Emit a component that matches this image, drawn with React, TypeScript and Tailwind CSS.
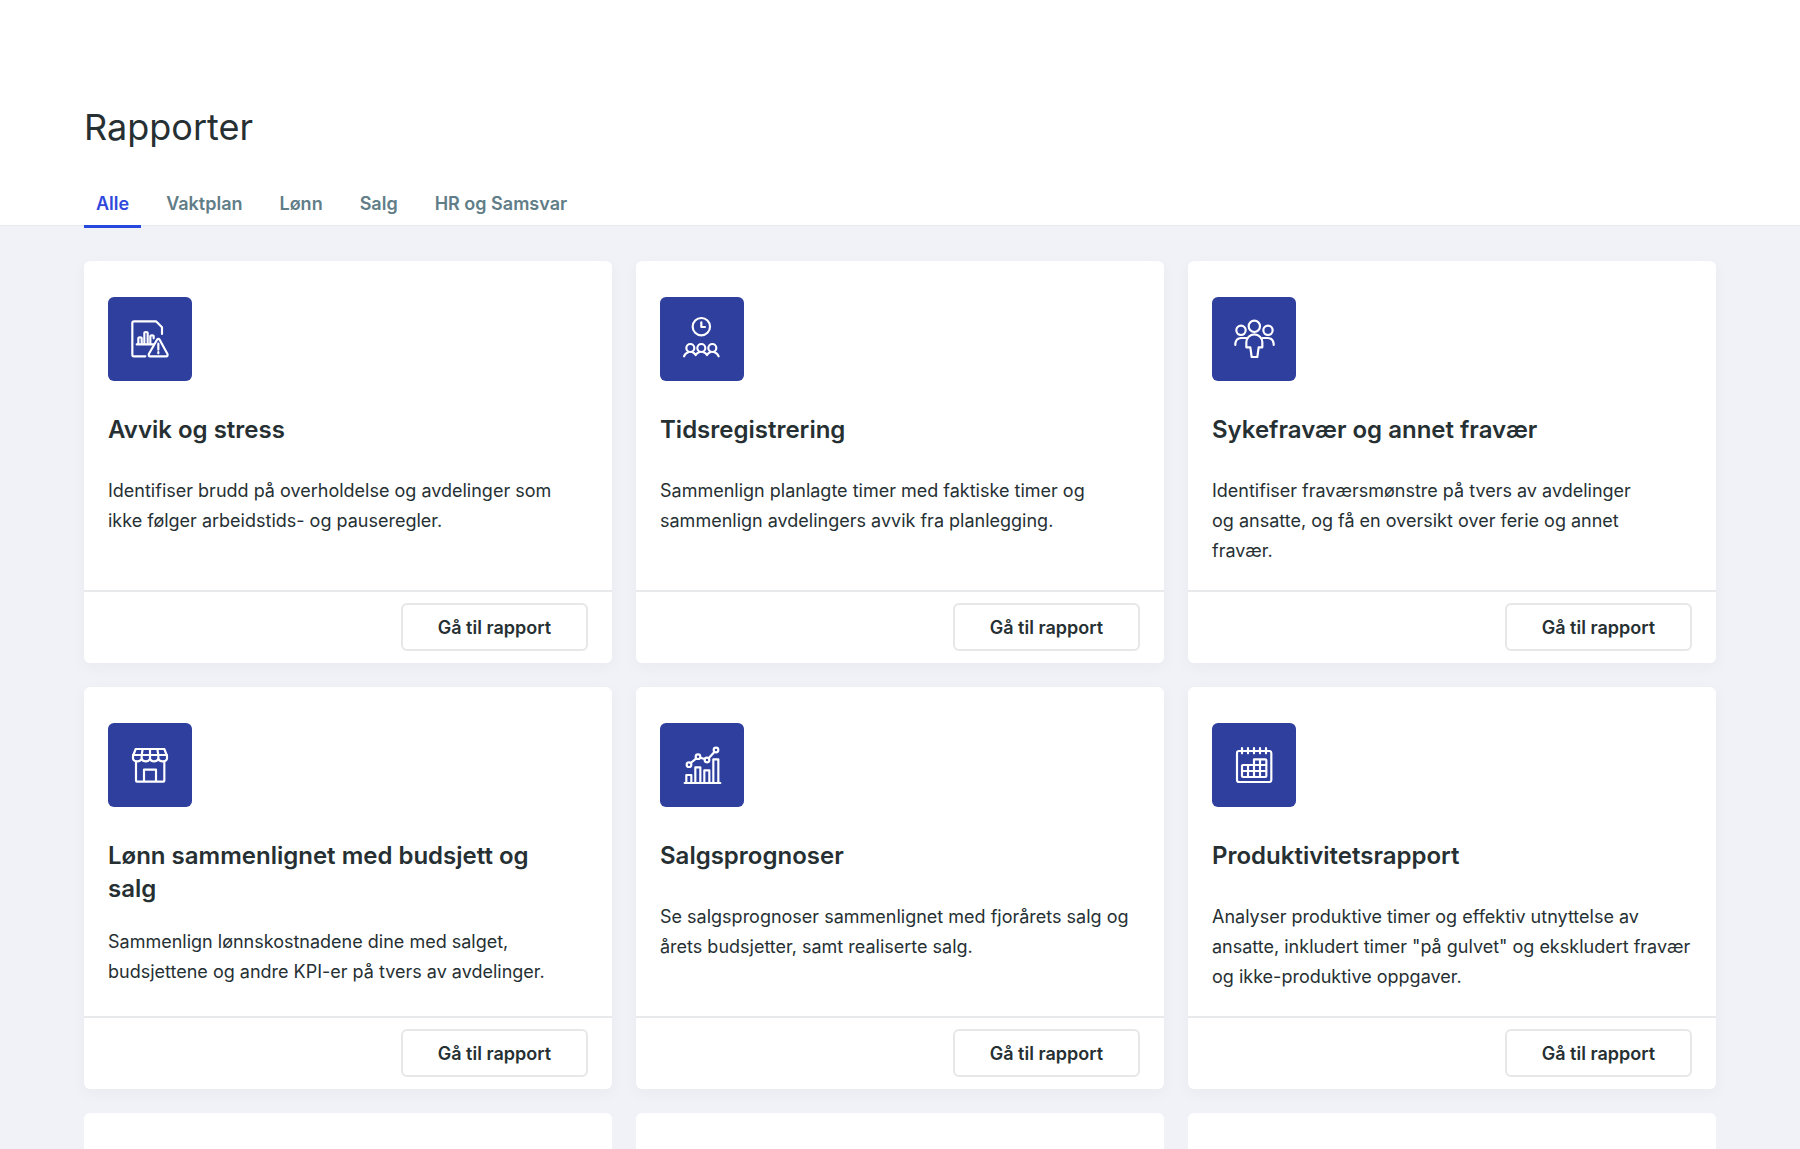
import type { ReactNode } from "react"
import { useState } from "react"

interface Report {
  title: string
  description: string
  icon: ReactNode
}

const DeviationIcon = (
  <>
    <path d="M46 112H12a5 5 0 0 1-5-5V12a5 5 0 0 1 5-5h66l18 18v20" />
    <path d="M20 76h51M25 76V58q0-3 5-3t5 3v18M43 76V42q0-3 5-3t5 3v34M61 76V52q0-3 5-3t5 3v6" />
    <path d="M81 62q4-5 8 0l23 42q3 8-4 8H61q-7 0-4-8Z" />
    <path d="M85 74v18M85 99v4" />
  </>
)

const TimeIcon = (
  <>
    <circle cx="58" cy="23" r="26" />
    <path d="M58 10v14h11" />
    <circle cx="25" cy="87" r="12" />
    <circle cx="58" cy="87" r="12" />
    <circle cx="91" cy="87" r="12" />
    <path d="M6 112q3-9 14-13M30 99q7 2 11 9 4-7 12-9M63 99q8 2 12 9 4-7 11-9M96 99q11 4 14 13" />
  </>
)

const PeopleIcon = (
  <>
    <circle cx="61" cy="22" r="17" />
    <circle cx="21" cy="34" r="14" />
    <circle cx="102" cy="34" r="14" />
    <path d="M4 78v-4q2-16 17-17h16M119 78v-4q-2-16-17-17H86" />
    <path d="M37 85V70a24 24 0 0 1 48 0v15H74l-4 29H53l-4-29Z" />
  </>
)

const StoreIcon = (
  <>
    <path d="M17 12h86l8 21v8q-2 8-13 8-10 0-13-7-4 7-13 7-9 0-12-7-4 7-12 7-10 0-13-7-4 7-13 7-11 0-13-8v-8Z" />
    <path d="M9 30h102M38 12l-3 18v12M60 12v30M82 12l3 18v12" />
    <path d="M18 50v57q0 3 3 3h79q3 0 3-3V50M42 110V74h36v36" />
  </>
)

const ForecastIcon = (
  <>
    <circle cx="21" cy="59" r="7" />
    <circle cx="48" cy="35" r="7" />
    <circle cx="75" cy="45" r="7" />
    <circle cx="102" cy="15" r="7" />
    <path d="M26 54l17-14M55 38l13 4M80 40l17-19" />
    <path d="M8 114h107M13 114V90h15v24M40 114V67h15v47M67 114V76h15v38M94 114V43h15v71" />
  </>
)

const CalendarIcon = (
  <>
    <rect x="9" y="18" width="103" height="93" rx="6" />
    <path d="M24 9v16M42 9v16M60 9v16M78 9v16M96 9v16" />
    <path d="M60 60V43h34q3 0 3 3v47q0 3-3 3H27q-3 0-3-3V63q0-3 3-3ZM60 60h37M24 78h73M42 60v36M60 60v36M78 43v53" />
  </>
)

const reports: Report[] = [
  {
    title: "Avvik og stress",
    description: "Identifiser brudd på overholdelse og avdelinger som ikke følger arbeidstids- og pauseregler.",
    icon: DeviationIcon,
  },
  {
    title: "Tidsregistrering",
    description: "Sammenlign planlagte timer med faktiske timer og sammenlign avdelingers avvik fra planlegging.",
    icon: TimeIcon,
  },
  {
    title: "Sykefravær og annet fravær",
    description: "Identifiser fraværsmønstre på tvers av avdelinger\nog ansatte, og få en oversikt over ferie og annet\nfravær.",
    icon: PeopleIcon,
  },
  {
    title: "Lønn sammenlignet med budsjett og salg",
    description: "Sammenlign lønnskostnadene dine med salget, budsjettene og andre KPI-er på tvers av avdelinger.",
    icon: StoreIcon,
  },
  {
    title: "Salgsprognoser",
    description: "Se salgsprognoser sammenlignet med fjorårets salg og årets budsjetter, samt realiserte salg.",
    icon: ForecastIcon,
  },
  {
    title: "Produktivitetsrapport",
    description: "Analyser produktive timer og effektiv utnyttelse av ansatte, inkludert timer \"på gulvet\" og ekskludert fravær og ikke-produktive oppgaver.",
    icon: CalendarIcon,
  },
]

const tabs = ["Alle", "Vaktplan", "Lønn", "Salg", "HR og Samsvar"]

const ReportCard = ({ title, description, icon }: Report) => (
  <article className="flex flex-col rounded-md bg-white shadow-[0_4px_16px_rgba(40,40,60,0.04)]">
    <div className="flex-1 px-6 pt-9 pb-6">
      <div className="flex size-[84px] items-center justify-center rounded-md bg-[#2f3f9e]">
        <svg
          viewBox="0 0 120 120"
          className="size-10 overflow-visible"
          fill="none"
          stroke="white"
          strokeWidth="6.5"
          strokeLinecap="round"
          strokeLinejoin="round"
          aria-hidden="true"
        >
          {icon}
        </svg>
      </div>
      <h2 className="mt-8 mb-[22px] min-h-[41px] pr-6 text-2xl leading-[33px] font-semibold">{title}</h2>
      <p className="text-[18px] leading-[30px] whitespace-pre-line">{description}</p>
    </div>
    <footer className="flex justify-end border-t-2 border-[#e8e9ea] px-6 pt-[11px] pb-3">
      <button
        type="button"
        className="h-12 rounded-md border-2 border-[#e6e7e8] bg-white px-[35px] text-[18px] font-semibold"
      >
        Gå til rapport
      </button>
    </footer>
  </article>
)

export default function App() {
  const [active, setActive] = useState("Alle")

  return (
    <div className="h-screen overflow-hidden bg-[#f0f2f8] font-['Inter',sans-serif] text-[#263033]">
      <header className="border-b border-[#e8eaee] bg-white px-21 pt-[103px]">
        <h1 className="text-4xl leading-[48px] font-normal">Rapporter</h1>
        <nav className="mt-[31px] -mb-[3px] flex gap-[13px]">
          {tabs.map((tab) => (
            <button
              key={tab}
              type="button"
              onClick={() => setActive(tab)}
              className={
                tab === active
                  ? "h-[46px] border-b-3 border-[#2748dc] px-3 text-[18px] font-semibold text-[#3049dc]"
                  : "h-[46px] border-b-3 border-transparent px-3 text-[18px] font-semibold text-[#617d87]"
              }
            >
              {tab}
            </button>
          ))}
        </nav>
      </header>
      <main className="grid grid-cols-3 gap-6 px-21 pt-[35px]">
        {reports.map((report) => (
          <ReportCard key={report.title} {...report} />
        ))}
        <div className="h-[402px] rounded-md bg-white" />
        <div className="h-[402px] rounded-md bg-white" />
        <div className="h-[402px] rounded-md bg-white" />
      </main>
    </div>
  )
}
